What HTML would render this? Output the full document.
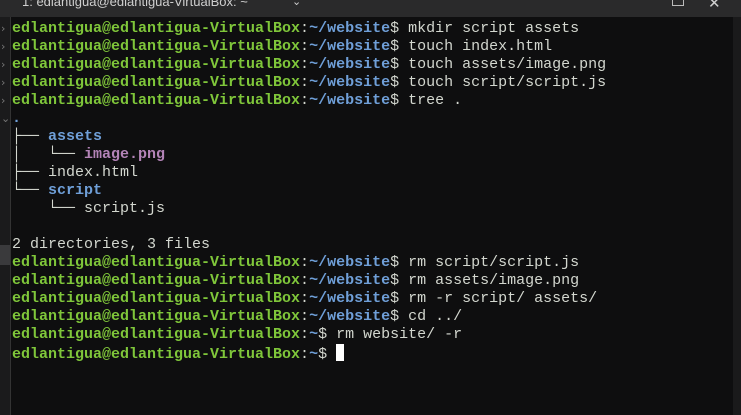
<!DOCTYPE html>
<html><head><style>
html,body{margin:0;padding:0;width:741px;height:415px;overflow:hidden;background:#0e0e0f;}
#title{position:absolute;left:0;top:0;width:741px;height:17px;background:#2a2a2b;color:#cfcfcf;font:13px "Liberation Sans",sans-serif;overflow:hidden}
#title .t{position:absolute;left:22px;top:-6px;}
#title .c{position:absolute;left:292px;top:-5px;font-size:11px;}
#title .m{position:absolute;left:672px;top:-4px;width:10px;height:9px;border:1px solid #bbb;border-top:none;}
#title .x{position:absolute;left:708px;top:-6px;font-size:15px;}
#gut{position:absolute;left:0;top:17px;width:10px;height:398px;background:#1b1b1c;border-right:1px solid #333;}
#gut2{position:absolute;left:0;top:245px;width:10px;height:20px;background:#3a3a3c;}
#chev{position:absolute;left:1px;top:20px;font:11px/18px "DejaVu Sans",sans-serif;color:#777;white-space:pre}
#right{position:absolute;left:733px;top:17px;width:8px;height:398px;background:#1a1a1b;}
#term{position:absolute;left:12px;top:20px;font-family:"Liberation Mono","DejaVu Sans Mono",monospace;font-size:15px;line-height:18px;color:#d3d7cf;white-space:pre;}
.g{color:#7fc63a;font-weight:bold}
.b{color:#6f9fd8;font-weight:bold}
.p{color:#b484b8;font-weight:bold}
.cur{display:inline-block;width:8px;height:17px;background:#fff;vertical-align:-3px}
</style></head><body>
<div id="title"><span class="t">1: edlantigua@edlantigua-VirtualBox: ~</span><span class="c">⌄</span><span class="m"></span><span class="x">✕</span></div>
<div id="gut"></div><div id="gut2"></div>
<div id="chev">›
›
›
›
›
⌄</div>
<div id="right"></div>
<div id="term"><span class="g">edlantigua@edlantigua-VirtualBox</span>:<span class="b">~/website</span>$ mkdir script assets
<span class="g">edlantigua@edlantigua-VirtualBox</span>:<span class="b">~/website</span>$ touch index.html
<span class="g">edlantigua@edlantigua-VirtualBox</span>:<span class="b">~/website</span>$ touch assets/image.png
<span class="g">edlantigua@edlantigua-VirtualBox</span>:<span class="b">~/website</span>$ touch script/script.js
<span class="g">edlantigua@edlantigua-VirtualBox</span>:<span class="b">~/website</span>$ tree .
<span class="b">.</span>
├── <span class="b">assets</span>
│   └── <span class="p">image.png</span>
├── index.html
└── <span class="b">script</span>
    └── script.js

2 directories, 3 files
<span class="g">edlantigua@edlantigua-VirtualBox</span>:<span class="b">~/website</span>$ rm script/script.js
<span class="g">edlantigua@edlantigua-VirtualBox</span>:<span class="b">~/website</span>$ rm assets/image.png
<span class="g">edlantigua@edlantigua-VirtualBox</span>:<span class="b">~/website</span>$ rm -r script/ assets/
<span class="g">edlantigua@edlantigua-VirtualBox</span>:<span class="b">~/website</span>$ cd ../
<span class="g">edlantigua@edlantigua-VirtualBox</span>:<span class="b">~</span>$ rm website/ -r
<span class="g">edlantigua@edlantigua-VirtualBox</span>:<span class="b">~</span>$ <span class="cur"></span></div>
</body></html>
